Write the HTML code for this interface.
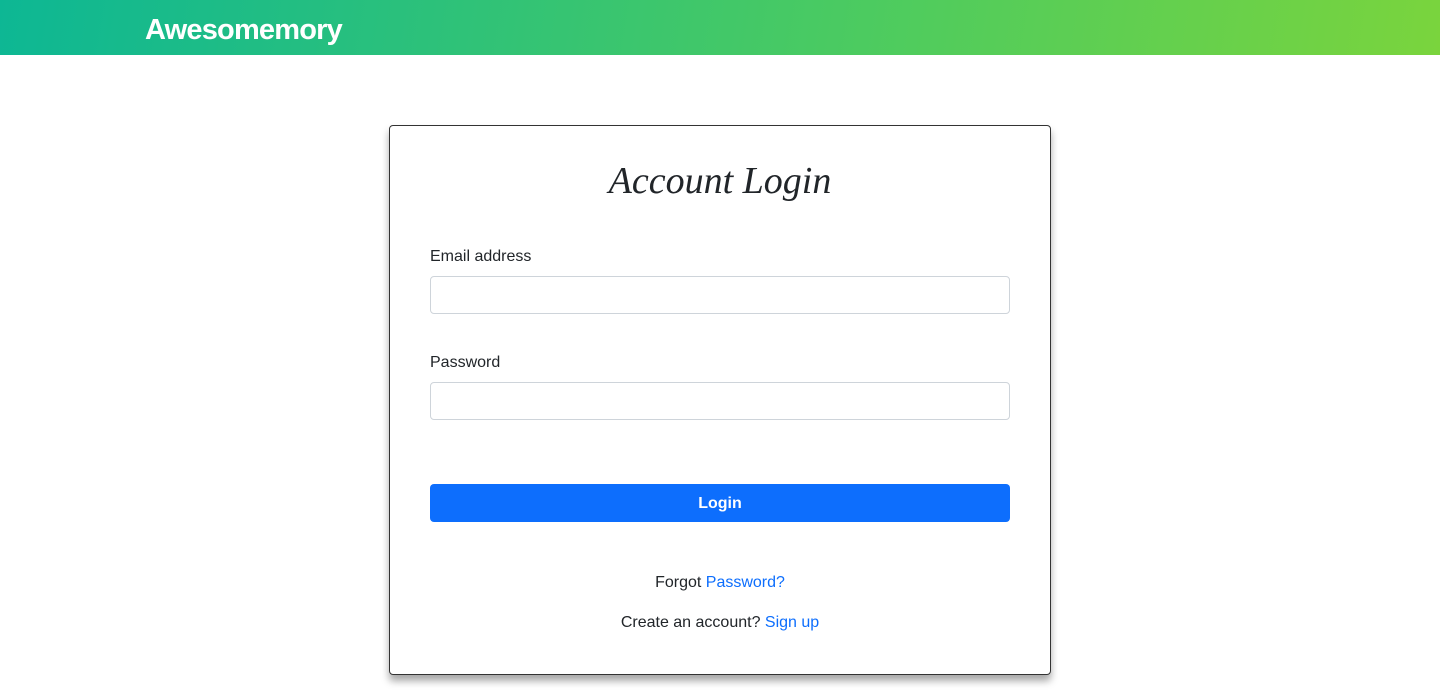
<!DOCTYPE html>
<html><head><style>
body{margin:0;width:1440px;height:699px;overflow:hidden;background:#fff;font-family:"Liberation Sans",sans-serif;color:#212529}
.nav{height:55px;background:linear-gradient(100deg,#0db794 0%,#4ccb60 60%,#7ad43d 100%);position:relative}
.nav span{position:absolute;left:145px;top:14px;color:#fff;font-weight:bold;font-size:29px;letter-spacing:-0.8px}
.card{position:absolute;left:389px;top:125px;width:662px;height:550px;border:1px solid #333;border-radius:4px;box-shadow:0 6px 8px rgba(0,0,0,.35);box-sizing:border-box}
h1{margin:0;position:absolute;top:33px;width:100%;text-align:center;font-family:"Liberation Serif",serif;font-style:italic;font-weight:normal;font-size:38px}
.lbl{position:absolute;left:40px;font-size:16px}
.inp{position:absolute;left:40px;width:580px;height:38px;border:1px solid #ced4da;border-radius:4px;box-sizing:border-box}
.btn{position:absolute;left:40px;top:358px;width:580px;height:38px;background:#0d6efd;border-radius:4px;color:#fff;text-align:center;line-height:39px;font-size:16px;font-weight:bold}
.c{position:absolute;width:100%;text-align:center;font-size:16px}
a{color:#0d6efd;text-decoration:none}
</style></head><body>
<div class="nav"><span>Awesomemory</span></div>
<div class="card">
<h1>Account Login</h1>
<div class="lbl" style="top:122px">Email address</div>
<div class="inp" style="top:150px"></div>
<div class="lbl" style="top:228px">Password</div>
<div class="inp" style="top:256px"></div>
<div class="btn">Login</div>
<div class="c" style="top:448px">Forgot <a>Password?</a></div>
<div class="c" style="top:488px">Create an account? <a>Sign up</a></div>
</div>
</body></html>
